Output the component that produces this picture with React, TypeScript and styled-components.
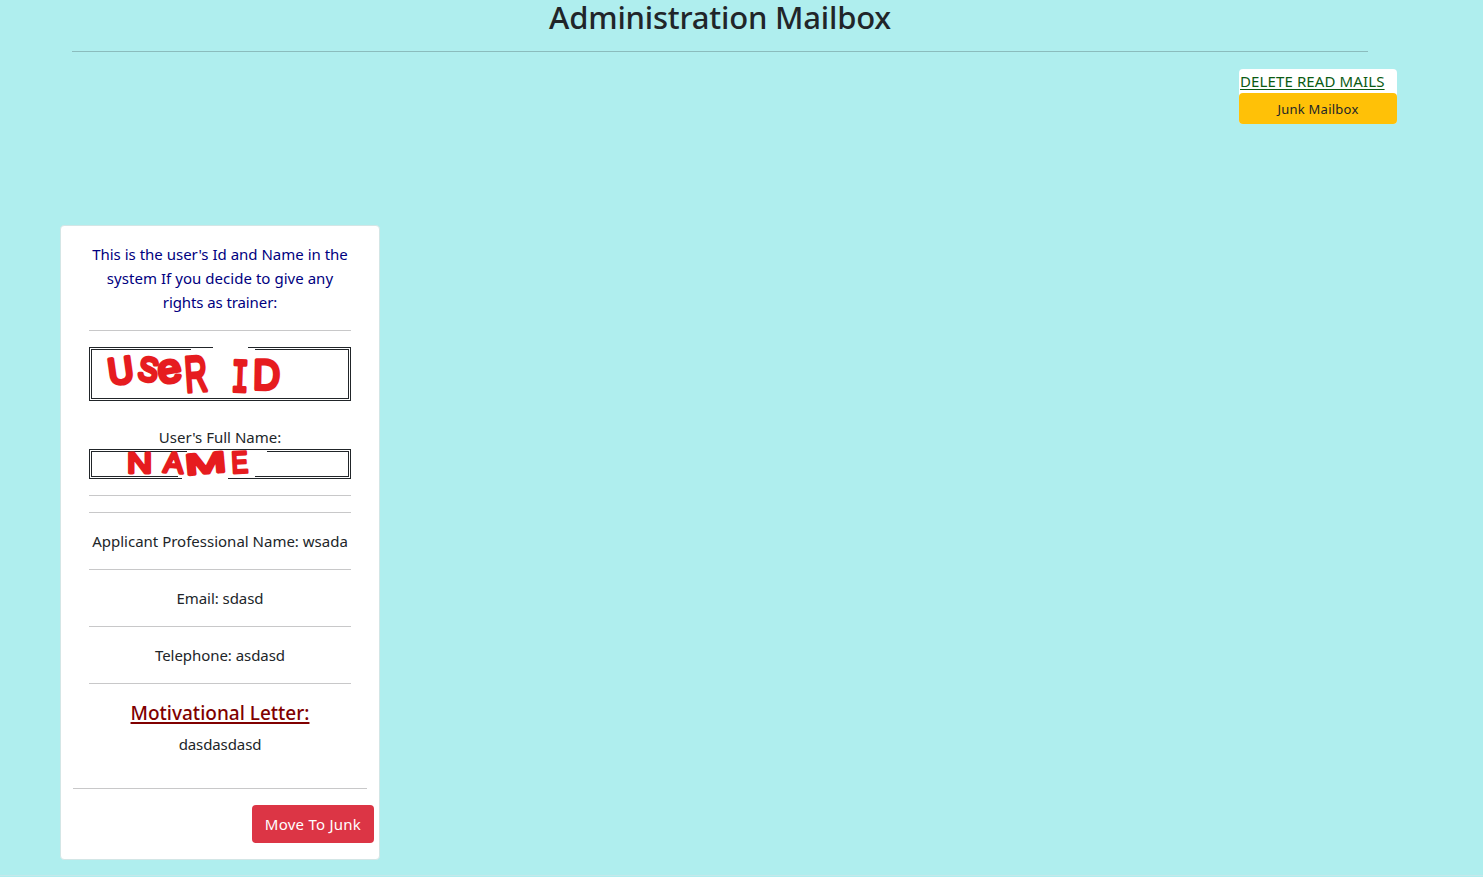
import React from "react";
import styled, { createGlobalStyle } from "styled-components";

const GlobalStyle = createGlobalStyle`
  *, *::before, *::after { box-sizing: border-box; }
  body {
    margin: 0;
    background: #afeeee;
    color: #212529;
    font-family: "Noto Sans", "Open Sans", sans-serif;
    font-size: 15px;
    line-height: 24px;
  }
`;

const Page = styled.main`
  height: 877px;
  padding: 0 0 1px;
  display: flex;
  flex-direction: column;
`;

const Header = styled.header`
  width: 1296px;
  height: 52px;
  margin-left: 72px;
  border-bottom: 1px solid #8bbcbd;
  text-align: center;
`;

const Title = styled.h1`
  margin: 0;
  font-size: 31px;
  line-height: 34px;
  font-weight: 500;
  letter-spacing: -0.2px;
`;

const Actions = styled.nav`
  width: 158px;
  height: 55px;
  margin: 17px 0 1px 1239px;
  display: flex;
  flex-direction: column;
  background: #fff;
  border-radius: 4px;
`;

const DeleteLink = styled.a`
  height: 24px;
  padding-left: 1px;
  color: #0b5a12;
  text-decoration: underline;
  text-underline-offset: 2px;
  letter-spacing: 0.12px;
  line-height: 25px;
  white-space: nowrap;
`;

const Button = styled.button<{ $tone: "warning" | "danger" }>`
  border: 0;
  padding: 0;
  border-radius: 4px;
  font-family: inherit;
  white-space: nowrap;
  width: ${(p) => (p.$tone === "warning" ? "100%" : "122px")};
  height: ${(p) => (p.$tone === "warning" ? "31px" : "38px")};
  font-size: ${(p) => (p.$tone === "warning" ? "13px" : "15px")};
  letter-spacing: ${(p) => (p.$tone === "warning" ? "0.25px" : "0.25px")};
  color: ${(p) => (p.$tone === "warning" ? "#212529" : "#fff")};
  background: ${(p) => (p.$tone === "warning" ? "#ffc107" : "#dc3545")};
`;

const Card = styled.article`
  width: 320px;
  height: 635px;
  margin: 100px 0 0 60px;
  padding: 16px 5px 0 12px;
  background: #fff;
  border: 1px solid #d3e6e6;
  border-radius: 4px;
  display: flex;
  flex-direction: column;
`;

const Details = styled.section`
  width: 262px;
  margin: 0 0 16px 16px;
  text-align: center;
`;

const Line = styled.p<{ $color?: string; $spacing?: number }>`
  margin: 0;
  color: ${(p) => p.$color ?? "inherit"};
  letter-spacing: ${(p) => p.$spacing ?? 0}px;
  white-space: nowrap;
`;

const Rule = styled.hr<{ $wide?: boolean }>`
  width: ${(p) => (p.$wide ? "294px" : "100%")};
  height: 1px;
  margin: 16px 0;
  border: 0;
  background: #c8c8c9;
`;

const Field = styled.div<{ $height: number; $gap: number }>`
  position: relative;
  height: ${(p) => p.$height}px;
  margin-bottom: ${(p) => p.$gap}px;
  border: 3px double #212529;
`;

const Marker = styled.svg`
  position: absolute;
  top: -3px;
  left: -3px;
  overflow: visible;
  font-family: "Liberation Sans", sans-serif;
  fill: #e61c1f;
  stroke: #e61c1f;
  stroke-linejoin: round;
`;

const LetterTitle = styled.h5`
  margin: 0 0 7px;
  color: #800000;
  font-size: 19px;
  line-height: 25px;
  padding-top: 1px;
  height: 25px;
  font-weight: 500;
  text-decoration: underline;
  text-decoration-thickness: 2px;
  text-underline-offset: 2px;
  white-space: nowrap;
`;

const Footer = styled.footer`
  display: flex;
  justify-content: flex-end;
`;

const BottomEdge = styled.div`
  height: 1px;
  margin-top: auto;
  flex: none;
  background: #c6e8eb;
`;

type Letter = { char: string; x: number; y: number; size: number; sx?: number; tilt?: number; mono?: boolean };

const idLetters: Letter[] = [
  { char: "U", x: 21, y: 38, size: 37, sx: 0.94, tilt: -8 },
  { char: "S", x: 48, y: 32, size: 33, sx: 0.88, tilt: 10 },
  { char: "e", x: 71, y: 37, size: 40, sx: 1.05, tilt: -10 },
  { char: "R", x: 97, y: 45, size: 50, sx: 0.62, tilt: -4 },
  { char: "I", x: 142, y: 44, size: 46, sx: 0.62, tilt: 2, mono: true },
  { char: "D", x: 164, y: 42, size: 42, sx: 0.88, tilt: 1 },
];

const nameLetters: Letter[] = [
  { char: "N", x: 38, y: 24, size: 29, sx: 1.2, tilt: 0 },
  { char: "A", x: 74, y: 23, size: 29, sx: 1.02, tilt: 4 },
  { char: "M", x: 97, y: 26, size: 29, sx: 1.7, tilt: -5 },
  { char: "E", x: 143, y: 24, size: 30, sx: 0.82, tilt: -3 },
];

function Handwriting({ letters, stroke }: { letters: Letter[]; stroke: number }) {
  return (
    <>
      {letters.map((l) => (
        <text
          key={l.char}
          fontSize={l.size}
          strokeWidth={stroke}
          fontFamily={l.mono ? "Liberation Mono" : undefined}
          transform={`translate(${l.x} ${l.y}) rotate(${l.tilt ?? 0}) scale(${l.sx ?? 1} 1)`}
        >
          {l.char}
        </text>
      ))}
    </>
  );
}

export default function App() {
  return (
    <>
      <GlobalStyle />
      <Page>
        <Header>
          <Title>Administration Mailbox</Title>
        </Header>
        <Actions>
          <DeleteLink>DELETE READ MAILS</DeleteLink>
          <Button $tone="warning">Junk Mailbox</Button>
        </Actions>
        <Card>
          <Details>
            <Line $color="#000080">This is the user's Id and Name in the</Line>
            <Line $color="#000080" $spacing={0.04}>system If you decide to give any</Line>
            <Line $color="#000080" $spacing={-0.1}>rights as trainer:</Line>
            <Rule />
            <Field $height={54} $gap={24}>
              <Marker width="262" height="54">
                <rect x="124" y="0" width="35" height="1" fill="#fff" stroke="none" />
                <rect x="102" y="2" width="64" height="1" fill="#fff" stroke="none" />
                <Handwriting letters={idLetters} stroke={4} />
              </Marker>
            </Field>
            <Line>User's Full Name:</Line>
            <Field $height={30} $gap={16}>
              <Marker width="262" height="30">
                <rect x="98" y="2" width="80" height="1" fill="#fff" stroke="none" />
                <rect x="89" y="27" width="77" height="1" fill="#fff" stroke="none" />
                <rect x="93" y="29" width="46" height="1" fill="#fff" stroke="none" />
                <Handwriting letters={nameLetters} stroke={3} />
              </Marker>
            </Field>
            <Rule />
            <Rule />
            <Line>Applicant Professional Name: wsada</Line>
            <Rule />
            <Line $spacing={-0.05}>Email: sdasd</Line>
            <Rule />
            <Line $spacing={-0.05}>Telephone: asdasd</Line>
            <Rule />
            <LetterTitle>Motivational Letter:</LetterTitle>
            <Line $spacing={-0.1}>dasdasdasd</Line>
          </Details>
          <Rule $wide />
          <Footer>
            <Button $tone="danger">Move To Junk</Button>
          </Footer>
        </Card>
        <BottomEdge />
      </Page>
    </>
  );
}
